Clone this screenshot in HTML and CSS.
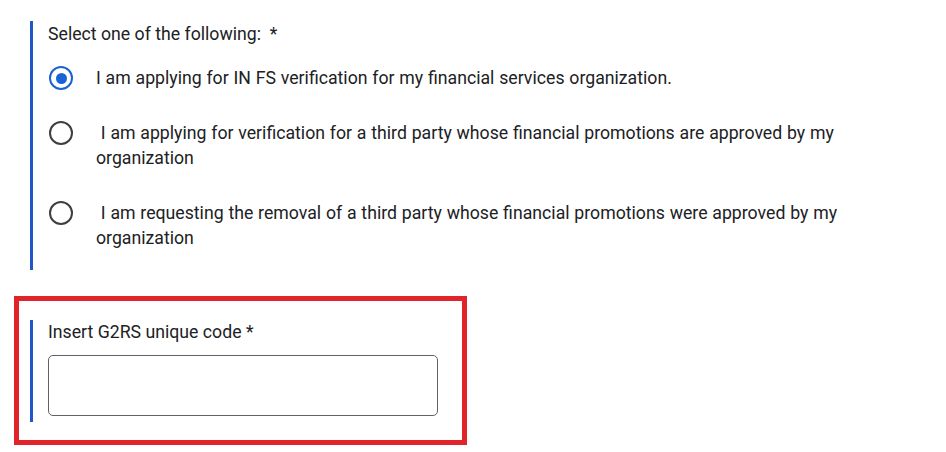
FILE: index.html
```html
<!DOCTYPE html>
<html lang="en">
<head>
<meta charset="utf-8">
<title>Form</title>
<link rel="stylesheet" href="styles.css">
</head>
<body>
  <section class="question">
    <div class="q-title">Select one of the following:&nbsp; *</div>
    <div class="options">
      <div class="option">
        <span class="radio radio-checked"></span>
        <span class="option-text">I am applying for IN FS verification for my financial services organization.</span>
      </div>
      <div class="option">
        <span class="radio"></span>
        <span class="option-text">&nbsp;I am applying for verification for a third party whose financial promotions are approved by my organization</span>
      </div>
      <div class="option">
        <span class="radio"></span>
        <span class="option-text">&nbsp;I am requesting the removal of a third party whose financial promotions were approved by my organization</span>
      </div>
    </div>
  </section>
  <div class="highlight">
    <section class="question question-code">
      <label class="q-label" for="code">Insert G2RS unique code *</label>
      <input class="text-input" id="code" type="text">
    </section>
  </div>
</body>
</html>
```

FILE: styles.css
```css
html, body {
  margin: 0;
  padding: 0;
  background: #ffffff;
}

body {
  font-family: Roboto, "Liberation Sans", Arial, sans-serif;
  font-size: 17.7px;
  color: #202124;
  padding-top: 21px;
}

.question {
  margin-left: 30px;
  border-left: 3px solid #1f57c9;
  padding: 1px 0 19px 15px;
  width: 800px;
}

.q-title {
  line-height: 24px;
}

.options {
  display: flex;
  flex-direction: column;
  gap: 30px;
  margin-top: 20px;
}

.option {
  display: flex;
  align-items: flex-start;
}

.radio {
  flex: none;
  box-sizing: border-box;
  width: 24px;
  height: 24px;
  margin: 0 23px 0 1px;
  border: 2px solid #3c4043;
  border-radius: 50%;
  position: relative;
}

.radio-checked {
  border: 2.5px solid #1a63d6;
}

.radio-checked::after {
  content: "";
  position: absolute;
  left: 50%;
  top: 50%;
  width: 11px;
  height: 11px;
  margin: -5.5px 0 0 -5.5px;
  border-radius: 50%;
  background: #1a63d6;
}

.option-text {
  line-height: 25px;
  max-width: 760px;
  word-spacing: 0.4px;
}

.highlight {
  box-sizing: border-box;
  margin: 26px 0 0 14px;
  width: 453px;
  height: 149px;
  border: 5px solid #e1232a;
  padding: 19px 0 18px 11px;
}

.question-code {
  margin-left: 0;
  width: auto;
  padding: 0 0 6px 15px;
  display: flex;
  flex-direction: column;
  align-items: flex-start;
}

.q-label {
  line-height: 24px;
}

.text-input {
  box-sizing: border-box;
  margin-top: 11px;
  width: 390px;
  height: 61px;
  border: 1px solid #5f6368;
  border-radius: 5px;
  background: #ffffff;
  font: inherit;
  padding: 0 12px;
  outline: none;
}
```
